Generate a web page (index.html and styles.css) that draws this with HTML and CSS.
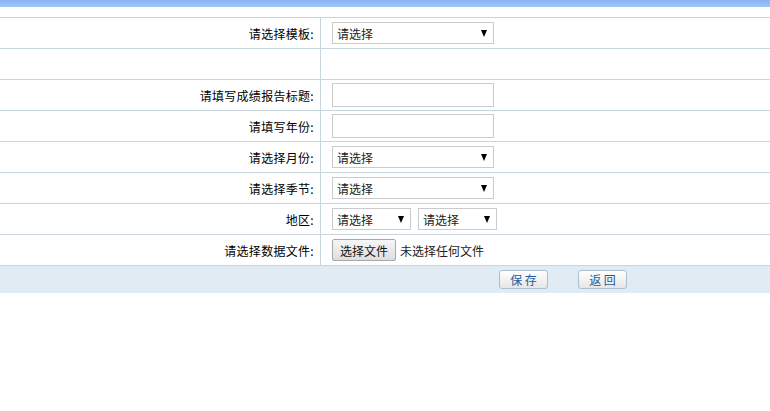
FILE: index.html
```html
<!DOCTYPE html>
<html lang="zh-CN">
<head>
    <meta charset="UTF-8">
    <title>成绩报告</title>
    <link rel="stylesheet" href="styles.css">
</head>
<body>
    <div class="topbar"></div>
    <div class="wrapper">
        <table class="form-table">
            <tr>
                <td class="label">请选择模板:</td>
                <td class="field">
                    <div class="select wide"><span>请选择</span><i class="arrow"></i></div>
                </td>
            </tr>
            <tr>
                <td class="label"></td>
                <td class="field"></td>
            </tr>
            <tr>
                <td class="label">请填写成绩报告标题:</td>
                <td class="field"><div class="text-input"></div></td>
            </tr>
            <tr>
                <td class="label">请填写年份:</td>
                <td class="field"><div class="text-input"></div></td>
            </tr>
            <tr>
                <td class="label">请选择月份:</td>
                <td class="field">
                    <div class="select wide"><span>请选择</span><i class="arrow"></i></div>
                </td>
            </tr>
            <tr>
                <td class="label">请选择季节:</td>
                <td class="field">
                    <div class="select wide"><span>请选择</span><i class="arrow"></i></div>
                </td>
            </tr>
            <tr>
                <td class="label">地区:</td>
                <td class="field">
                    <div class="pair">
                        <div class="select small"><span>请选择</span><i class="arrow"></i></div>
                        <div class="select small"><span>请选择</span><i class="arrow"></i></div>
                    </div>
                </td>
            </tr>
            <tr>
                <td class="label">请选择数据文件:</td>
                <td class="field">
                    <div class="file">
                        <span class="file-btn">选择文件</span>
                        <span class="file-name">未选择任何文件</span>
                    </div>
                </td>
            </tr>
        </table>
        <div class="actions">
            <span class="btn save">保 存</span>
            <span class="btn back">返 回</span>
        </div>
    </div>
</body>
</html>
```

FILE: styles.css
```css
body {
    margin: 0;
    padding: 0;
    background-color: #fff;
    font-family: "Noto Sans CJK SC", "Liberation Sans", sans-serif;
    font-size: 12px;
    color: #000;
}
.topbar {
    height: 7px;
    background: linear-gradient(#86b2f4, #a4c6f8);
}
.wrapper {
    padding-top: 10px;
}
.form-table {
    width: 100%;
    border-collapse: collapse;
    border-top: 1px solid #c9d5dc;
}
.form-table td {
    height: 30px;
    padding: 0;
    border-bottom: 1px solid #c9d5dc;
}
.form-table .label {
    width: 314px;
    padding-right: 6px;
    text-align: right;
    letter-spacing: 0.3px;
    border-right: 1px solid #c9d5dc;
}
.form-table .field {
    padding-left: 11px;
}
.select {
    display: flex;
    align-items: center;
    justify-content: space-between;
    box-sizing: border-box;
    height: 22px;
    border: 1px solid #cbcbcb;
    padding: 0 6px 0 4px;
    color: #222;
    background: #fff;
}
.select.wide {
    width: 162px;
}
.select.small {
    width: 79px;
}
.arrow {
    width: 0;
    height: 0;
    border-left: 3.5px solid transparent;
    border-right: 3.5px solid transparent;
    border-top: 7px solid #000;
}
.pair {
    display: flex;
    gap: 7px;
}
.text-input {
    box-sizing: border-box;
    width: 162px;
    height: 24px;
    border: 1px solid #cbcbcb;
    background: #fff;
}
.file {
    display: flex;
    align-items: center;
    gap: 4px;
}
.file-btn {
    box-sizing: border-box;
    display: inline-flex;
    align-items: center;
    justify-content: center;
    width: 64px;
    height: 22px;
    border: 1px solid #a8a8a8;
    border-radius: 2px;
    background: linear-gradient(#f6f6f6, #dedede);
    color: #111;
}
.file-name {
    color: #222;
}
.actions {
    height: 27px;
    background-color: #e1ebf4;
    display: flex;
    align-items: center;
    padding-left: 499px;
    gap: 30px;
}
.btn {
    box-sizing: border-box;
    display: inline-flex;
    align-items: center;
    justify-content: center;
    width: 49px;
    height: 19px;
    border: 1px solid #a9c1cf;
    border-radius: 3px;
    background: linear-gradient(#ffffff, #e6e6e6);
    color: #1d5a96;
    font-size: 12px;
}
```
